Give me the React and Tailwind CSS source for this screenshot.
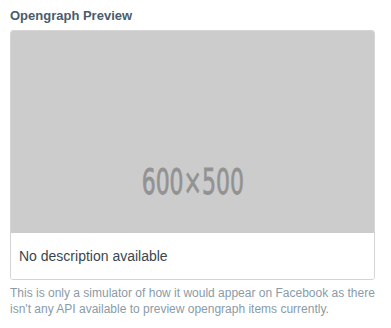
export default function App() {
  return (
    <main className="min-h-screen bg-white px-[10px] pt-[8px] font-['Liberation_Sans',Arial,sans-serif]">
      <h2 className="text-[13px] font-bold leading-[16px] text-[#4b5b69]">Opengraph Preview</h2>
      <section className="mt-[6px] w-[365px] overflow-hidden rounded-[3px] border border-[#d4d4d4]">
        <div className="flex h-[202px] items-center justify-center bg-[#cccccc] pt-[100px]">
          <span className="inline-block scale-x-[0.61] font-['DejaVu_Sans',sans-serif] text-[36px] leading-none text-[#929292] [-webkit-text-stroke:0.8px_#929292]">
            600×500
          </span>
        </div>
        <div className="flex h-[46px] items-center bg-white px-[8px]">
          <p className="text-[14px] text-[#39464f]">No description available</p>
        </div>
      </section>
      <p className="mt-[5px] text-[12px] leading-[16px] text-[#8a9ba7]">
        This is only a simulator of how it would appear on Facebook as there isn't any API available to preview opengraph items currently.
      </p>
    </main>
  );
}
